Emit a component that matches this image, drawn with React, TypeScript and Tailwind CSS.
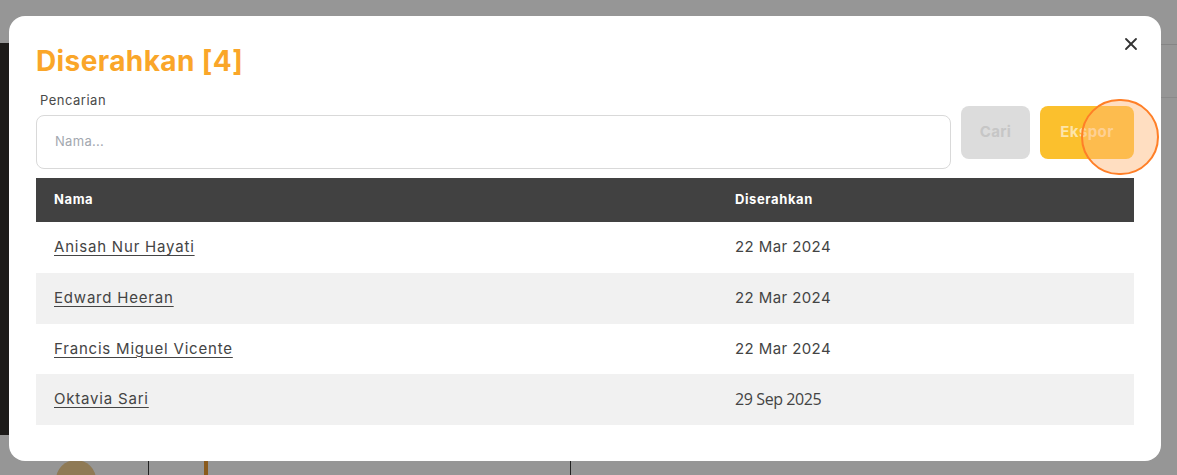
import React from "react";
import { X } from "lucide-react";

const rows = [
  { name: "Anisah Nur Hayati", date: "22 Mar 2024" },
  { name: "Edward Heeran", date: "22 Mar 2024" },
  { name: "Francis Miguel Vicente", date: "22 Mar 2024" },
  { name: "Oktavia Sari", date: "29 Sep 2025", alt: true },
];

export default function App() {
  return (
    <div className="relative w-[1177px] h-[475px] overflow-hidden bg-[#969696] font-['Inter',sans-serif]">
      {/* Page behind the overlay */}
      <div className="absolute left-0 top-[43px] w-[12px] h-[392px] bg-[#1d1b19]" />
      <div className="absolute right-0 top-[44px] w-[40px] h-px bg-[#858585]" />
      <div className="absolute right-0 top-[97px] w-[40px] h-px bg-[#8a8a8a]" />
      <div className="absolute left-[56px] top-[460px] w-[40px] h-[40px] rounded-full bg-[#8f7a55]" />
      <div className="absolute left-[148px] top-[440px] w-px h-[40px] bg-[#222]" />
      <div className="absolute left-[204px] top-[440px] w-[4px] h-[40px] bg-[#8a5a1c]" />
      <div className="absolute left-[570px] top-[440px] w-px h-[40px] bg-[#222]" />

      {/* Modal */}
      <div className="absolute left-[9px] top-[16px] w-[1152px] h-[445px] bg-white rounded-[16px] px-[27px] pt-[28px]">
        <button className="absolute right-[20px] top-[18px] text-[#333]">
          <X className="w-[20px] h-[20px]" strokeWidth={2.2} />
        </button>

        <h2 className="text-[28px] leading-[35px] font-bold text-[#faa629] tracking-[0.4px]">Diserahkan [4]</h2>

        <div className="flex items-start gap-[10px] mt-[13px]">
          <div className="flex-1">
            <label className="block pl-[4px] text-[13px] leading-[16px] text-[#4a4a4a] tracking-[0.5px]">Pencarian</label>
            <div className="mt-[7px] h-[54px] rounded-[8px] border border-[#d9d9d9] flex items-center px-[18px] text-[13px] text-[#a3a8b0] tracking-[0.3px]">
              Nama...
            </div>
          </div>
          <button className="mt-[14px] w-[69px] h-[53px] rounded-[8px] bg-[#dcdcdc] text-[#c6c6c6] font-bold text-[15px] tracking-[0.4px]">
            Cari
          </button>
          <div className="relative mt-[14px]">
            <button className="w-[94px] h-[53px] rounded-[8px] bg-[#fbc02d] text-white/60 font-bold text-[15px] tracking-[0.4px]">
              Ekspor
            </button>
            <div className="absolute left-[41px] top-[-7px] w-[78px] h-[76px] rounded-full border-2 border-[#ff7f27] bg-[#ffb676]/45" />
          </div>
        </div>

        <table className="w-full mt-[9px] border-collapse text-[15px] text-[#444]">
          <thead>
            <tr className="bg-[#414141] text-white text-[13px] font-bold h-[44px] tracking-[0.6px]">
              <th className="text-left pl-[18px] w-[699px]">Nama</th>
              <th className="text-left">Diserahkan</th>
            </tr>
          </thead>
          <tbody>
            {rows.map((r, i) => (
              <tr key={r.name} className={`h-[50.75px] ${i % 2 === 1 ? "bg-[#f1f1f1]" : "bg-white"}`}>
                <td className="pl-[18px] tracking-[0.8px]">
                  <a className="underline underline-offset-[3px] decoration-[1px]">{r.name}</a>
                </td>
                <td className={r.alt ? "font-['Open_Sans',sans-serif] text-[16px] tracking-[-0.4px] pb-[2px]" : "tracking-[0.4px]"}>
                  {r.date}
                </td>
              </tr>
            ))}
          </tbody>
        </table>
      </div>
    </div>
  );
}
